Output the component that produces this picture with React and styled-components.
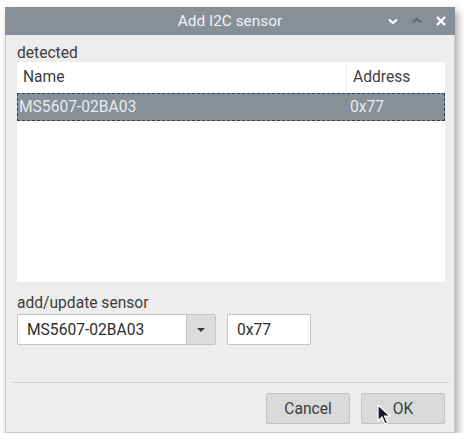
import styled, { createGlobalStyle } from 'styled-components'

const Global = createGlobalStyle`
  html, body {
    margin: 0;
    background: #ffffff;
    font-family: Roboto, "Liberation Sans", sans-serif;
  }
`

const Window = styled.div`
  position: relative;
  margin: 7px 0 0 5px;
  width: 450px;
  height: 426px;
  display: flex;
  flex-direction: column;
  box-shadow: 3px 4px 8px rgba(0, 0, 0, 0.35);
`

const TitleBar = styled.div`
  height: 28px;
  flex: none;
  background: #878f99;
  display: grid;
  grid-template-columns: 1fr auto 1fr;
  align-items: center;
`

const Title = styled.div`
  grid-column: 2;
  color: #f2f2f2;
  font-size: 15.4px;
`

const Controls = styled.div`
  justify-self: end;
  display: flex;
  align-items: center;
  gap: 10px;
  padding-right: 7px;
`

const CtrlIcon = styled.svg`
  width: 14px;
  height: 14px;
  display: block;
`

const Body = styled.div`
  flex: 1;
  background: #ededed;
  border: 1px solid #c9c9c9;
  border-top: none;
  display: flex;
  flex-direction: column;
  padding: 0 9px 0 11px;
  color: #3d3d3d;
  font-size: 15.6px;
`

const Label = styled.div`
  height: 18px;
  line-height: 18px;
  margin-top: ${p => p.$top}px;
  margin-bottom: ${p => p.$bottom}px;
`

const Table = styled.div`
  height: 220px;
  background: #ffffff;
  display: flex;
  flex-direction: column;
`

const Row = styled.div`
  display: grid;
  grid-template-columns: 330px 1fr;
  height: ${p => p.$h}px;
  align-items: center;
  box-sizing: border-box;
  background: ${p => (p.$selected ? '#878f99' : 'transparent')};
  color: ${p => (p.$selected ? '#e8eaec' : '#3d3d3d')};
  border: ${p => (p.$selected ? '1px dashed #3c4046' : 'none')};
  margin-bottom: ${p => (p.$selected ? 0 : 1)}px;
`

const Cell = styled.div`
  padding-left: ${p => p.$pad}px;
  height: 100%;
  display: flex;
  align-items: center;
  border-right: ${p => (p.$divider ? '1px solid #ececec' : 'none')};
`

const FieldRow = styled.div`
  display: flex;
  align-items: center;
  gap: 11px;
`

const Combo = styled.div`
  width: 199px;
  height: 31px;
  box-sizing: border-box;
  border: 1px solid #c4c4c4;
  border-radius: 2px;
  background: #ffffff;
  display: flex;
  overflow: hidden;
`

const ComboText = styled.div`
  flex: 1;
  padding-left: 9px;
  display: flex;
  align-items: center;
  color: #2e2e2e;
`

const ComboButton = styled.div`
  width: 28px;
  background: #dcdcdc;
  border-left: 1px solid #c8c8c8;
  display: flex;
  align-items: center;
  justify-content: center;
`

const Entry = styled.div`
  width: 84px;
  height: 31px;
  box-sizing: border-box;
  border: 1px solid #c4c4c4;
  border-radius: 2px;
  background: #ffffff;
  padding-left: 9px;
  display: flex;
  align-items: center;
  color: #2e2e2e;
`

const Separator = styled.div`
  height: 1px;
  background: #d4d4d4;
  margin: 37px -4px 0 -5px;
`

const ButtonRow = styled.div`
  display: flex;
  justify-content: flex-end;
  gap: 11px;
  margin-top: 10px;
`

const Button = styled.div`
  width: 84px;
  height: 31px;
  box-sizing: border-box;
  border: 1px solid #c3c3c3;
  border-radius: 2px;
  background: #d9d9d9;
  color: #3d3d3d;
  display: flex;
  align-items: center;
  justify-content: center;
`

const Cursor = styled.svg`
  position: absolute;
  left: 372px;
  top: 397px;
  width: 14px;
  height: 22px;
`

export default function App() {
  return (
    <>
      <Global />
      <Window>
        <TitleBar>
          <Title>Add I2C sensor</Title>
          <Controls>
            <CtrlIcon viewBox="0 0 14 14">
              <path d="M3 5.5 L7 9 L11 5.5" fill="none" stroke="#ffffff" strokeWidth="2.2" />
            </CtrlIcon>
            <CtrlIcon viewBox="0 0 14 14">
              <path d="M3 8.5 L7 5 L11 8.5" fill="none" stroke="#61676f" strokeWidth="2.2" />
            </CtrlIcon>
            <CtrlIcon viewBox="0 0 14 14">
              <path d="M3 3 L11 11 M11 3 L3 11" fill="none" stroke="#ffffff" strokeWidth="2.4" />
            </CtrlIcon>
          </Controls>
        </TitleBar>
        <Body>
          <Label $top={9} $bottom={0}>detected</Label>
          <Table>
            <Row $h={30}>
              <Cell $pad={6} $divider>Name</Cell>
              <Cell $pad={6}>Address</Cell>
            </Row>
            <Row $h={28} $selected>
              <Cell $pad={1}>MS5607-02BA03</Cell>
              <Cell $pad={2}>0x77</Cell>
            </Row>
          </Table>
          <Label $top={12} $bottom={2}>add/update sensor</Label>
          <FieldRow>
            <Combo>
              <ComboText>MS5607-02BA03</ComboText>
              <ComboButton>
                <svg width="10" height="6" viewBox="0 0 10 6">
                  <path d="M1 1 L9 1 L5 5 Z" fill="#3a3a3a" />
                </svg>
              </ComboButton>
            </Combo>
            <Entry>0x77</Entry>
          </FieldRow>
          <Separator />
          <ButtonRow>
            <Button>Cancel</Button>
            <Button>OK</Button>
          </ButtonRow>
        </Body>
        <Cursor viewBox="0 0 14 22">
          <path d="M1 1 L1 17 L5 13 L8 20 L10.5 19 L7.5 12 L13 12 Z" fill="#1a1a2a" stroke="#ffffff" strokeWidth="1.2" strokeLinejoin="round" />
        </Cursor>
      </Window>
    </>
  )
}
